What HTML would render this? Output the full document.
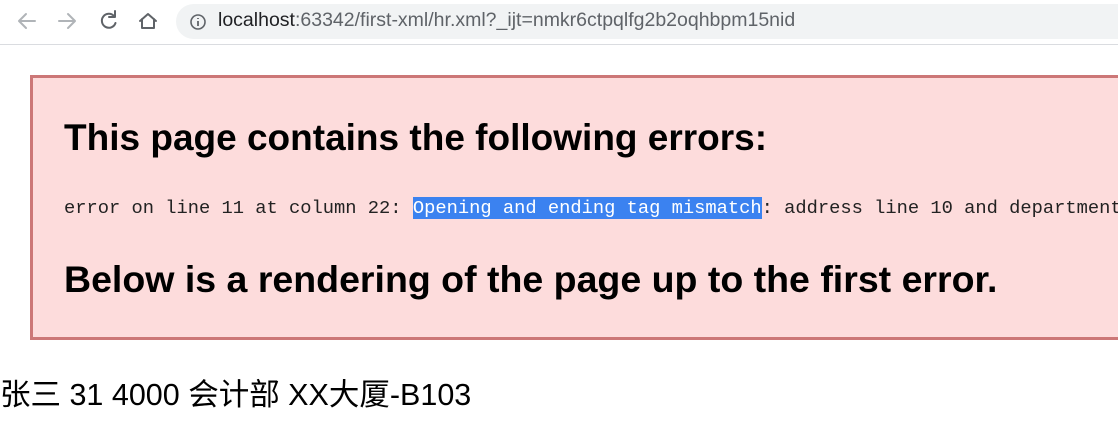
<!DOCTYPE html>
<html><head><meta charset="utf-8"><style>
body{margin:0;width:1118px;height:444px;overflow:hidden;background:#fff;font-family:"Liberation Sans","Noto Sans CJK SC",sans-serif;position:relative}
.bar{position:absolute;left:0;top:0;width:1118px;height:44px;background:#fff;border-bottom:1px solid #dadce0}
.pill{position:absolute;left:176px;top:4px;width:960px;height:35px;border-radius:18px;background:#f1f3f4}
.url{position:absolute;left:218px;top:9px;font-size:19.5px;color:#202124;white-space:nowrap}
.url span{color:#5f6368}
.box{position:absolute;left:30px;top:75px;width:1100px;height:259px;border:3px solid #cc7777;background:#fddcdc}
h1{position:absolute;left:64px;margin:0;font-size:37px;font-weight:bold;white-space:nowrap;color:#000}
.mono{position:absolute;left:64px;top:197px;font-family:"Liberation Mono",monospace;font-size:18.75px;white-space:nowrap;color:#222}
.sel{background:#3b82f0;color:#fff}
.txt{position:absolute;left:0;top:370px;font-size:30.5px;white-space:nowrap;color:#000}
</style></head><body>
<div class="bar">
<svg width="176" height="44" style="position:absolute;left:0;top:0" fill="none" stroke-width="2" stroke-linecap="round" stroke-linejoin="round">
<path d="M35 21H20M26 14l-7 7 7 7" stroke="#b0b4b8"/>
<path d="M59 21h15M68 14l7 7-7 7" stroke="#b0b4b8"/>
<path d="M114 16a7 7 0 1 0 1.5 7M115 11v6h-6" stroke="#5f6368"/>
<path d="M140 21l8-7 8 7M142 19v9h12v-9" stroke="#5f6368"/>
</svg>
<div class="pill"></div>
<svg width="20" height="20" style="position:absolute;left:188px;top:12px"><circle cx="10" cy="10" r="7" fill="none" stroke="#5f6368" stroke-width="1.6"/><path d="M10 9v5M10 6v1" stroke="#5f6368" stroke-width="1.8"/></svg>
<div class="url">localhost<span>:63342/first-xml/hr.xml?_ijt=nmkr6ctpqlfg2b2oqhbpm15nid</span></div>
</div>
<div class="box"></div>
<h1 style="top:117px">This page contains the following errors:</h1>
<div class="mono">error on line 11 at column 22: <span class="sel">Opening and ending tag mismatch</span>: address line 10 and department</div>
<h1 style="top:258px;font-size:37.5px">Below is a rendering of the page up to the first error.</h1>
<div class="txt">张三 31 4000 会计部 XX大厦-B103</div>
</body></html>
